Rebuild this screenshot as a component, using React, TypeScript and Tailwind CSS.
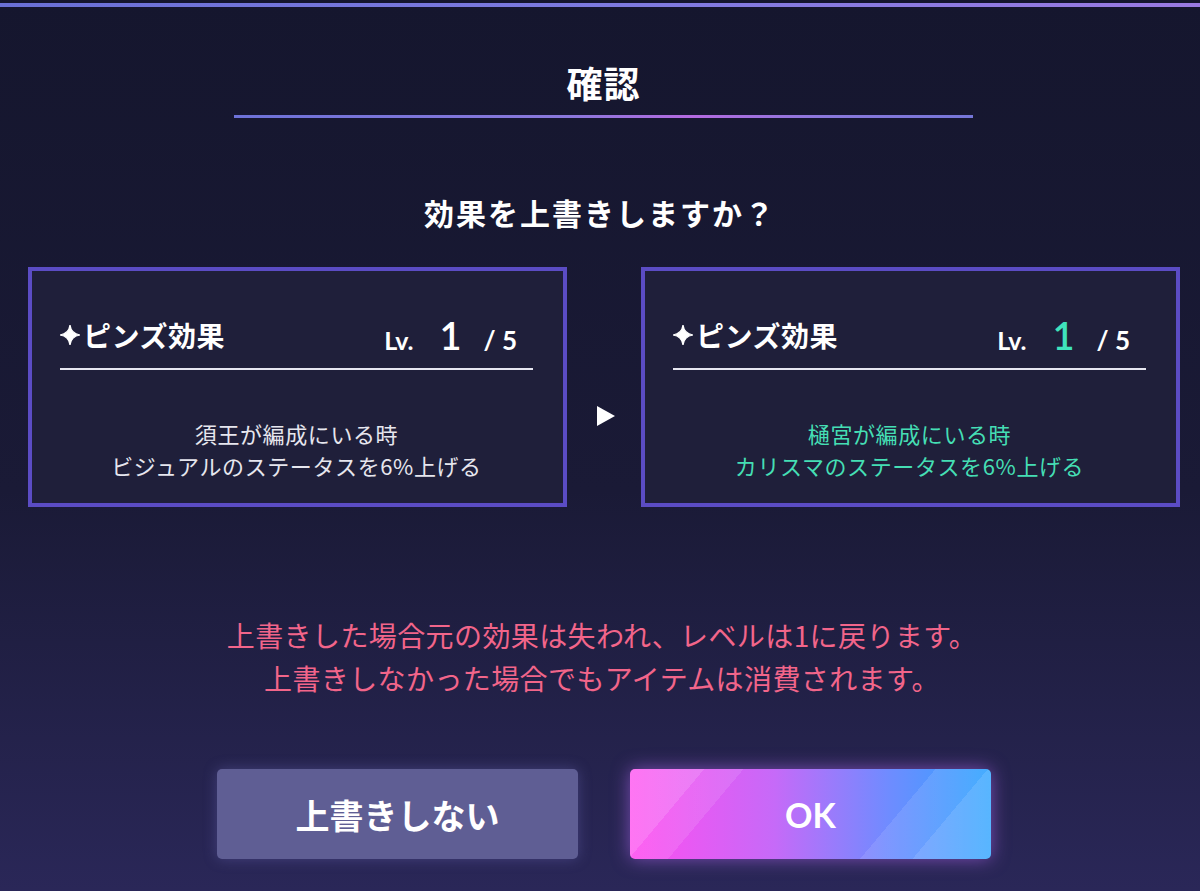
import React from "react";

const font = { fontFamily: '"Noto Sans CJK JP", "Noto Sans", sans-serif' };

function EffectCard({
  lines,
  accent,
}: {
  lines: string[];
  accent: boolean;
}) {
  return (
    <div className="w-[539px] h-[240px] border-4 border-[#5b4cc4] bg-[#1f1f3a] pt-[44px] pl-[28px] pr-[30px]">
      <div className="flex items-center h-[40px] pr-[16px]">
        <span className="text-[28px] font-bold text-white leading-[40px] flex items-center tracking-[0.5px]">
          <svg width="20" height="20" viewBox="0 0 20 20" className="mr-[3px]">
            <path
              d="M10 0 Q11.2 8.8 20 10 Q11.2 11.2 10 20 Q8.8 11.2 0 10 Q8.8 8.8 10 0 Z"
              fill="#ffffff"
              stroke="#ffffff"
              strokeWidth="1.2"
              strokeLinejoin="round"
            />
          </svg>
          ピンズ効果
        </span>
        <div className="ml-auto flex items-baseline text-white font-bold">
          <span className="text-[25px] font-['Lato'] mr-[26px]">Lv.</span>
          <span
            className={`text-[38px] font-['Lato'] font-semibold mr-[22px] ${
              accent ? "text-[#3fe3bc]" : "text-white"
            }`}
          >
            1
          </span>
          <span className="text-[26px] font-['Lato']">/ 5</span>
        </div>
      </div>
      <div className="h-[2px] bg-[#e6e6f0] mt-[13px]" />
      <div
        className={`mt-[47px] text-center text-[22px] leading-[32px] font-normal tracking-[0.6px] ${
          accent ? "text-[#45deb4]" : "text-[#e6e6ee]"
        }`}
      >
        {lines.map((l) => (
          <div key={l}>{l}</div>
        ))}
      </div>
    </div>
  );
}

export default function App() {
  return (
    <div
      style={font}
      className="w-[1200px] h-[891px] overflow-hidden bg-[linear-gradient(180deg,#15162e_0%,#1a1a36_55%,#2a2758_100%)] flex flex-col items-center"
    >
      <div className="w-full pt-[3px]">
        <div className="h-[4px] w-full bg-[linear-gradient(90deg,#6a70d6,#7d7ae0_50%,#9a7ae2)]" />
      </div>

      <h1 className="mt-[53px] ml-[7px] text-[36px] leading-[44px] font-bold text-white tracking-[1px]">
        確認
      </h1>
      <div className="mt-[11px] ml-[7px] w-[739px] h-[3px] bg-[linear-gradient(90deg,#6d72d8_0%,#8a78dc_45%,#b46ae0_62%,#8a78dc_80%,#7576d8_100%)]" />

      <p className="mt-[75px] text-[30px] leading-[38px] font-bold text-white tracking-[2px]">
        効果を上書きしますか？
      </p>

      <div className="mt-[36px] w-full pl-[28px] flex items-start">
        <EffectCard
          lines={["須王が編成にいる時", "ビジュアルのステータスを6%上げる"]}
          accent={false}
        />
        <div className="w-[74px] flex justify-center pt-[137px]">
          <svg width="22" height="24" viewBox="0 0 22 24" className="ml-[4px]">
            <path d="M2 2 L20 12 L2 22 Z" fill="#ffffff" />
          </svg>
        </div>
        <EffectCard
          lines={["樋宮が編成にいる時", "カリスマのステータスを6%上げる"]}
          accent={true}
        />
      </div>

      <div className="mt-[107px] ml-[4px] text-center text-[28px] leading-[43px] font-normal tracking-[0.4px] text-[#f2658a]">
        <div>上書きした場合元の効果は失われ、レベルは1に戻ります。</div>
        <div>上書きしなかった場合でもアイテムは消費されます。</div>
      </div>

      <div className="mt-[69px] flex gap-[52px] ml-[8px]">
        <button className="w-[361px] h-[90px] rounded-[5px] bg-[#5f5e94] shadow-[0_0_14px_rgba(120,118,200,0.35)] text-white text-[34px] font-bold">
          上書きしない
        </button>
        <button className="relative w-[361px] h-[90px] rounded-[5px] overflow-hidden bg-[linear-gradient(90deg,#ff4ef0_0%,#c66af8_40%,#6e8cff_72%,#2ea4ff_100%)] shadow-[0_0_18px_rgba(190,110,255,0.55)] text-white text-[34px] font-bold">
          <span className="absolute inset-0 bg-[linear-gradient(130deg,rgba(255,255,255,0.22)_0%,rgba(255,255,255,0.22)_17%,rgba(255,255,255,0.1)_17%,rgba(255,255,255,0.1)_26%,transparent_26%,transparent_70%,rgba(255,255,255,0.1)_70%,rgba(255,255,255,0.1)_82%,rgba(255,255,255,0.2)_82%,rgba(255,255,255,0.2)_100%)]" />
          <span className="relative font-['Lato']">OK</span>
        </button>
      </div>
    </div>
  );
}
